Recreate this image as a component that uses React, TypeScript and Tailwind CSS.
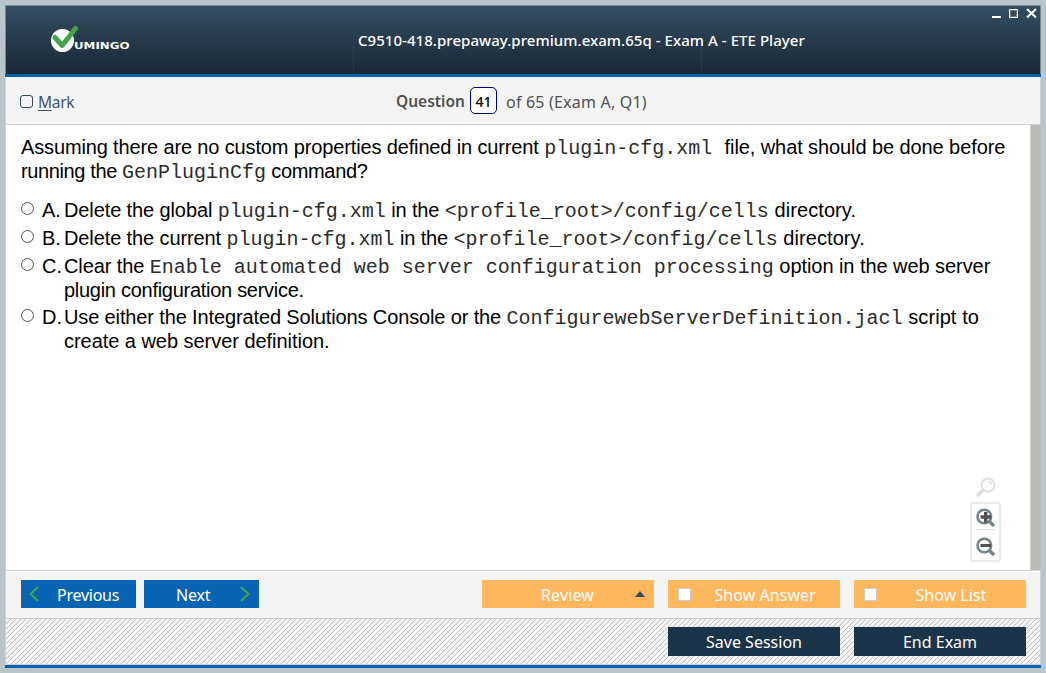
import React from "react";

const Mono = ({ children }: { children: React.ReactNode }) => (
  <span className="font-['Liberation_Mono','Courier_New',monospace] text-[20px] leading-none tracking-normal text-[#2c2c2c]">{children}</span>
);

const options = [
  {
    letter: "A.",
    lines: [<><span className="tracking-[-0.11px]">Delete the global </span><Mono>plugin-cfg.xml</Mono><span className="tracking-[-0.12px]"> in the </span><Mono>&lt;profile_root&gt;/config/cells</Mono><span className="tracking-[0.08px]"> directory.</span></>],
    box: "h-7",
  },
  {
    letter: "B.",
    lines: [<><span className="tracking-[-0.11px]">Delete the current </span><Mono>plugin-cfg.xml</Mono><span className="tracking-[-0.12px]"> in the </span><Mono>&lt;profile_root&gt;/config/cells</Mono><span className="tracking-[0.08px]"> directory.</span></>],
    box: "h-7",
  },
  {
    letter: "C.",
    lines: [
      <><span className="tracking-[-0.1px]">Clear the </span><Mono>Enable automated web server configuration processing</Mono><span className="tracking-[-0.06px]"> option in the web server</span></>,
      <span className="tracking-[-0.28px]">plugin configuration service.</span>,
    ],
    box: "h-[51px]",
  },
  {
    letter: "D.",
    lines: [
      <><span className="tracking-[-0.13px]">Use either the Integrated Solutions Console or the </span><Mono>ConfigurewebServerDefinition.jacl</Mono><span className="tracking-[0.08px]"> script to</span></>,
      <span className="tracking-[-0.04px]">create a web server definition.</span>,
    ],
    box: "h-[51px]",
  },
];

function Logo() {
  return (
    <svg width="82" height="30" viewBox="0 0 82 30" className="ml-[45px] mt-[19px] shrink-0">
      <circle cx="11.5" cy="15.5" r="11.5" fill="#fff" />
      <path d="M4 12.5 L11.2 20.5 L24.5 3.5" fill="none" stroke="#43a447" strokeWidth="5" strokeLinecap="round" strokeLinejoin="round" />
      <text x="23" y="23.5" textLength="55.5" lengthAdjust="spacingAndGlyphs" fill="#fff" fontFamily="DejaVu Sans, sans-serif" fontWeight="bold" fontSize="9.5">UMINGO</text>
    </svg>
  );
}

function Magnifier({ sign, color }: { sign: "plus" | "minus"; color: string }) {
  return (
    <svg width="20" height="20" viewBox="0 0 20 20" className="shrink-0">
      <circle cx="8.3" cy="8.5" r="6.8" fill="none" stroke={color} strokeWidth="2.6" />
      <path d="M13.5 13.5 L18 18" stroke={color} strokeWidth="3.2" />
      <path d={sign === "plus" ? "M4.5 9 H15 M9.7 4 V14.5" : "M4.5 8.5 H15"} stroke="#525252" strokeWidth={sign === "plus" ? 3.4 : 3} />
    </svg>
  );
}

function Hatch() {
  return (
    <svg width="1034" height="45" className="absolute inset-0" shapeRendering="crispEdges">
      <defs>
        <pattern id="hatch" width="5" height="5" patternUnits="userSpaceOnUse">
          <path d="M4 0h1v1h-1z M3 1h1v1h-1z M2 2h1v1h-1z M1 3h1v1h-1z M0 4h1v1h-1z" fill="#c0c0c0" />
        </pattern>
      </defs>
      <rect width="1034" height="45" fill="url(#hatch)" />
    </svg>
  );
}

export default function App() {
  return (
    <div className="h-[673px] w-[1046px] overflow-hidden bg-[#b8c5cb] p-[5px] font-['Noto_Sans',sans-serif]">
      <div className="flex h-[663px] w-[1036px] flex-col">
        <header className="relative flex h-[69px] shrink-0 border border-b-0 border-[#7b8b91] bg-linear-to-b from-[#364e62] to-[#1a2735]">
          <Logo />
          <div className="absolute left-[347px] top-0 h-full border-l border-dotted border-[#3340a0]/80" />
          <div className="absolute left-[695px] top-0 h-full border-l border-dotted border-[#3340a0]/80" />
          <h1 className="absolute left-[352px] top-[22px] whitespace-nowrap text-[15px] leading-[24px] font-medium tracking-[0.05px] text-white">
            C9510-418.prepaway.premium.exam.65q - Exam A - ETE Player
          </h1>
          <svg width="46" height="12" viewBox="0 0 46 12" className="absolute right-[2px] top-[2px]">
            <path d="M0 8 h9 v2 h-9z" fill="#fff" />
            <path d="M17.5 1.5 h8 v8 h-8z" fill="none" stroke="#fff" />
            <path d="M18.5 2.5 h6 v6 h-6z" fill="none" stroke="#777" />
            <path d="M35 1 L44 9.5 M44 1 L35 9.5" stroke="#fff" strokeWidth="2" />
          </svg>
        </header>
        <div className="h-[3px] shrink-0 bg-[#0562b1]" />

        <div className="flex h-[48px] shrink-0 items-center border-x border-b border-[#d2d2d2] bg-[#f4f4f4] text-[#505050]">
          <span className="ml-[14px] mt-px h-[13px] w-[13px] shrink-0 rounded-[3px] border border-[#344b5e]" />
          <span className="ml-[5px] mt-[4px] w-[358px] text-[15.5px] tracking-[-0.3px] text-[#40566a]"><u className="underline-offset-2">M</u>ark</span>
          <span className="mt-[2px] w-[74px] whitespace-nowrap text-[15.5px] font-semibold">Question</span>
          <span className="flex h-[27px] w-[27px] shrink-0 items-center justify-center rounded-[5px] border border-[#000080] bg-white pt-[2px] text-[14px] font-medium text-black">41</span>
          <span className="ml-[9px] mt-[2px] whitespace-nowrap text-[16px] tracking-[0.2px]">of 65 (Exam A, Q1)</span>
        </div>

        <main className="flex h-[445px] shrink-0 border-l border-[#d2d2d2] bg-white">
          <div className="relative w-[1025px] shrink-0 border-r border-[#d2d2d2] pl-[15px] pt-[10px] font-['Liberation_Sans',Arial,sans-serif] text-[20px] leading-6 text-black">
            <p className="whitespace-nowrap"><span className="tracking-[-0.14px]">Assuming there are no custom properties defined in current </span><Mono>plugin-cfg.xml</Mono><span className="tracking-[-0.09px]"><span className="pl-[1.5px]">&nbsp;</span> file, what should be done before</span></p>
            <p className="whitespace-nowrap"><span className="tracking-[-0.38px]">running the </span><Mono>GenPluginCfg</Mono><span className="tracking-[-0.35px]"> command?</span></p>
            <div className="mt-[15px]">
              {options.map((o) => (
                <div key={o.letter} className={`flex ${o.box}`}>
                  <span className="mt-[4px] h-[13px] w-[13px] shrink-0 rounded-full border border-[#555]" />
                  <span className="ml-[8px] w-[22px] shrink-0">{o.letter}</span>
                  <div>
                    {o.lines.map((l, i) => <div key={i} className="h-6 whitespace-nowrap">{l}</div>)}
                  </div>
                </div>
              ))}
            </div>
            <div className="absolute left-[964px] top-[352px] flex w-[31px] flex-col items-center">
              <svg width="21" height="21" viewBox="0 0 21 21" className="mr-px">
                <circle cx="13" cy="8" r="6.5" fill="none" stroke="#dfdfdf" strokeWidth="2" />
                <path d="M8 13 L2 19" stroke="#dfdfdf" strokeWidth="3.5" />
                <path d="M13.5 4.5 Q16 5 16.5 7.5" fill="none" stroke="#dfdfdf" strokeWidth="1.5" />
              </svg>
              <div className="mt-[4px] flex h-[60px] w-[31px] flex-col items-center rounded-[3px] border-2 border-[#ebebeb] pt-[4px]">
                <Magnifier sign="plus" color="#74838d" />
                <div className="mt-px mb-[7px] h-px w-[19px] shrink-0 bg-[#dedede]" />
                <Magnifier sign="minus" color="#74838d" />
              </div>
            </div>
          </div>
          <div className="flex-1 bg-[#bcbbb7]" />
        </main>

        <footer className="h-[95px] shrink-0 border-x border-[#d2d2d2] text-[16px] text-white">
          <div className="h-[2px] border-t border-[#d2d2d2] bg-white" />
          <div className="flex h-[47px] border-b border-[#cdcdcd] bg-[#f4f4f4] pl-[15px] pt-[8px]">
            <button className="flex h-7 w-[115px] items-center bg-[#0965b4]">
              <svg width="10" height="16" viewBox="0 0 10 16" className="ml-[8px]"><path d="M9 1 L1.5 8 L9 15" fill="none" stroke="#42a447" strokeWidth="2" /></svg>
              <span className="ml-[18px] mt-[2px] tracking-[-0.25px]">Previous</span>
            </button>
            <button className="ml-2 flex h-7 w-[115px] items-center bg-[#0965b4]">
              <span className="ml-[32px] mt-[2px] w-[64px] text-left tracking-[-0.2px]">Next</span>
              <svg width="10" height="16" viewBox="0 0 10 16"><path d="M1 1 L8.5 8 L1 15" fill="none" stroke="#42a447" strokeWidth="2" /></svg>
            </button>
            <button className="ml-[223px] flex h-7 w-[172px] items-center bg-[#ffb75e]">
              <span className="ml-[59px] mt-[2px] w-[94px] text-left tracking-[0.15px]">Review</span>
              <svg width="10" height="6" viewBox="0 0 10 6"><path d="M0 6 L5 0 L10 6Z" fill="#344b5e" /></svg>
            </button>
            <button className="ml-[14px] flex h-7 w-[172px] items-center bg-[#ffb75e]">
              <span className="ml-[10px] mt-px h-[13px] w-[13px] border border-[#ccc] bg-white" />
              <span className="ml-[23.5px] mt-[2px] whitespace-nowrap tracking-[0.05px]">Show Answer</span>
            </button>
            <button className="ml-[14px] flex h-7 w-[172px] items-center bg-[#ffb75e]">
              <span className="ml-[10px] mt-px h-[13px] w-[13px] border border-[#ccc] bg-white" />
              <span className="ml-[38.5px] mt-[2px] whitespace-nowrap">Show List</span>
            </button>
          </div>
          <div className="relative flex h-[46px] gap-[14px] border-b border-[#cdcdcd] bg-[#f4f4f4] pl-[662px] pt-[8px]">
            <Hatch />
            <button className="relative h-[29px] w-[172px] bg-[#1b344a] pt-px">Save Session</button>
            <button className="relative h-[29px] w-[172px] bg-[#1b344a] pt-px">End Exam</button>
          </div>
        </footer>
        <div className="h-[3px] shrink-0 bg-[#0562b1]" />
      </div>
    </div>
  );
}
